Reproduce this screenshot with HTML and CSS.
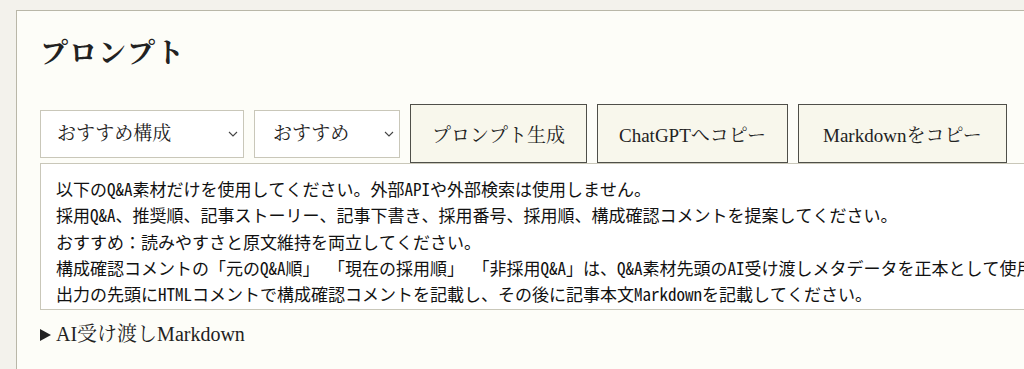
FILE: index.html
```html
<!DOCTYPE html>
<html lang="ja">
<head>
  <meta charset="UTF-8">
  <meta name="viewport" content="width=device-width, initial-scale=1.0">
  <title>プロンプト</title>
  <link rel="stylesheet" href="styles.css">
</head>
<body>
  <!-- パネル: プロンプト -->
  <section class="panel">
    <h1>プロンプト</h1>

    <!-- 操作バー -->
    <div class="toolbar">
      <select class="select select-layout">
        <option>おすすめ構成</option>
      </select>
      <select class="select select-tone">
        <option>おすすめ</option>
      </select>
      <button class="btn">プロンプト生成</button>
      <button class="btn">ChatGPTへコピー</button>
      <button class="btn btn-wide">Markdownをコピー</button>
    </div>

    <!-- 生成されたプロンプト -->
    <textarea class="prompt-box" wrap="off" readonly>以下のQ&A素材だけを使用してください。外部APIや外部検索は使用しません。
採用Q&A、推奨順、記事ストーリー、記事下書き、採用番号、採用順、構成確認コメントを提案してください。
おすすめ：読みやすさと原文維持を両立してください。
構成確認コメントの「元のQ&A順」 「現在の採用順」 「非採用Q&A」は、Q&A素材先頭のAI受け渡しメタデータを正本として使用してください。
出力の先頭にHTMLコメントで構成確認コメントを記載し、その後に記事本文Markdownを記載してください。
</textarea>

    <details class="handoff">
      <summary>AI受け渡しMarkdown</summary>
    </details>
  </section>
</body>
</html>
```

FILE: styles.css
```css
/* ────────────────────────────────── */
/* RESET */
* {
  margin: 0;
  padding: 0;
  box-sizing: border-box;
}

html, body {
  overflow: hidden;
}

body {
  font-family: "Liberation Serif", "Noto Serif CJK JP", "Noto Sans CJK JP", serif;
  background-color: #f3f2ec;
  color: #222;
  padding: 10px 0 0 16px;
}

/* ────────────────────────────────── */
/* PANEL */
.panel {
  width: 1060px;
  min-height: 400px;
  background-color: #fdfdf8;
  border: 1px solid #b9b7a8;
  padding: 23px 23px;
}

.panel h1 {
  font-size: 28px;
  line-height: 40px;
  font-weight: bold;
  letter-spacing: 1px;
  margin-bottom: 30px;
}

/* ────────────────────────────────── */
/* TOOLBAR */
.toolbar {
  display: flex;
  align-items: center;
  gap: 10px;
}

.select {
  appearance: none;
  -webkit-appearance: none;
  flex: none;
  height: 48px;
  font-family: inherit;
  font-size: 19px;
  color: #222;
  background-color: #fff;
  border: 1px solid #c9c7b9;
  border-radius: 0;
  padding: 0 30px 0 16px;
  background-image: url("data:image/svg+xml,%3Csvg xmlns='http://www.w3.org/2000/svg' width='10' height='6' viewBox='0 0 10 6'%3E%3Cpath d='M1 1l4 4 4-4' fill='none' stroke='%23444' stroke-width='1.1'/%3E%3C/svg%3E");
  background-repeat: no-repeat;
  background-position: right 5px center;
}
.select-layout { width: 204px; }
.select-tone { width: 146px; padding-left: 18px; }

.btn {
  flex: none;
  height: 59px;
  font-family: inherit;
  font-size: 19px;
  color: #222;
  background-color: #f8f7ec;
  border: 1px solid #4f4f49;
  border-radius: 0;
  padding: 0 21px;
  white-space: nowrap;
  cursor: pointer;
}
.btn-wide {
  padding: 0 24px;
}
.btn:hover {
  background-color: #efeee0;
}

/* ────────────────────────────────── */
/* PROMPT BOX */
.prompt-box {
  display: block;
  width: 100%;
  height: 147px;
  font-family: "Noto Sans Mono CJK JP", "Noto Sans CJK JP", monospace;
  font-size: 17px;
  line-height: 1.55;
  color: #111;
  background-color: #fff;
  border: 1px solid #c9c7b9;
  padding: 12px 15px;
  resize: none;
  overflow: hidden;
  white-space: pre;
}

/* ────────────────────────────────── */
/* DETAILS */
.handoff {
  margin-top: 11px;
  font-size: 20px;
  line-height: 27px;
}
.handoff summary {
  list-style: none;
  cursor: pointer;
}
.handoff summary::-webkit-details-marker {
  display: none;
}
.handoff summary::before {
  content: "";
  display: inline-block;
  border-left: 11px solid #222;
  border-top: 6px solid transparent;
  border-bottom: 6px solid transparent;
  margin-right: 5px;
  vertical-align: 0;
}
```
